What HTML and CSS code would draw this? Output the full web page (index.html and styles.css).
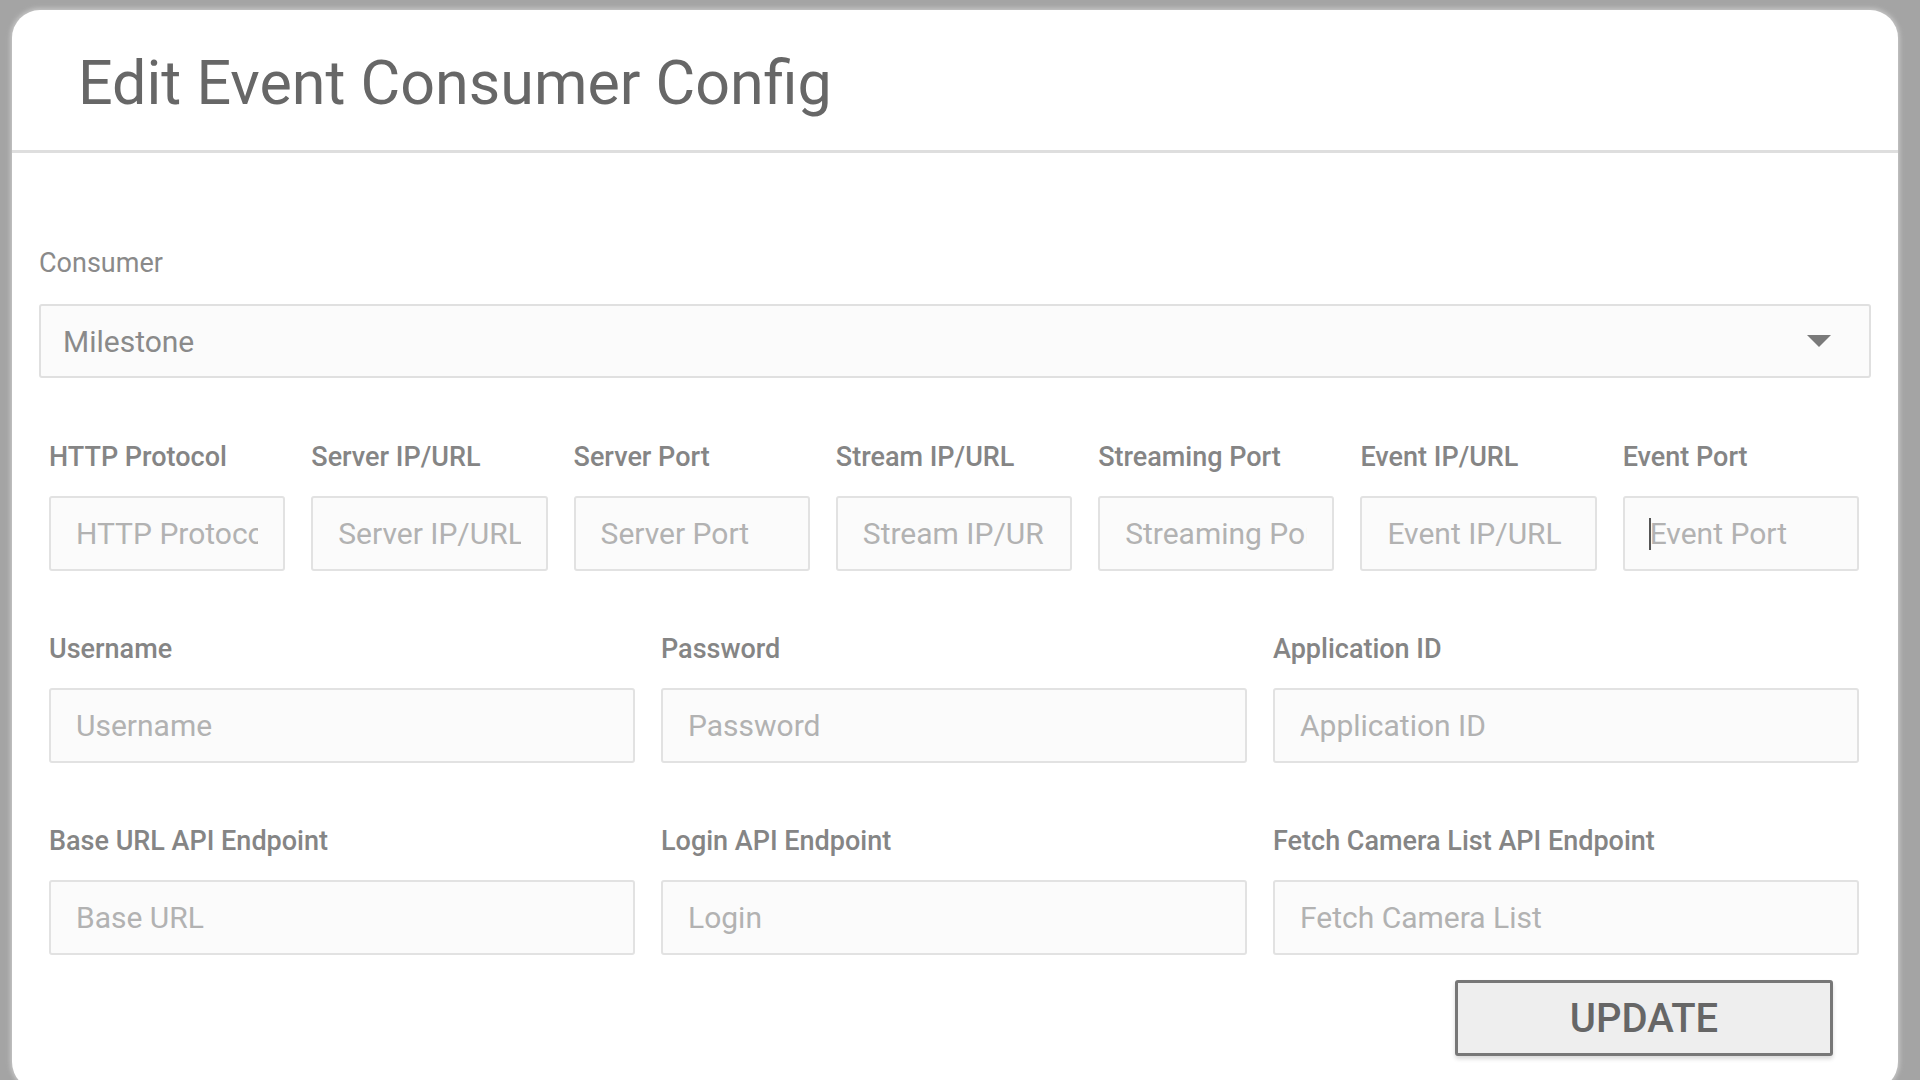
FILE: index.html
```html
<!DOCTYPE html>
<html lang="en">
<head>
    <meta charset="UTF-8">
    <title>Edit Event Consumer Config</title>
    <link rel="stylesheet" href="styles.css">
</head>
<body>
    <div class="dialog">
        <div class="dialog-header">
            <h1 class="dialog-title">Edit Event Consumer Config</h1>
        </div>
        <div class="dialog-body">
            <div class="consumer">
                <div class="label consumer-label">Consumer</div>
                <div class="select">
                    <span class="select-value">Milestone</span>
                    <svg class="select-arrow" width="24" height="12" viewBox="0 0 24 12">
                        <polygon points="0,0 24,0 12,12" fill="#7a7a7a"/>
                    </svg>
                </div>
            </div>

            <div class="grid grid-7">
                <div class="cell">
                    <label class="label">HTTP Protocol</label>
                    <input type="text" placeholder="HTTP Protocol">
                </div>
                <div class="cell">
                    <label class="label">Server IP/URL</label>
                    <input type="text" placeholder="Server IP/URL">
                </div>
                <div class="cell">
                    <label class="label">Server Port</label>
                    <input type="text" placeholder="Server Port">
                </div>
                <div class="cell">
                    <label class="label">Stream IP/URL</label>
                    <input type="text" placeholder="Stream IP/URL">
                </div>
                <div class="cell">
                    <label class="label">Streaming Port</label>
                    <input type="text" placeholder="Streaming Port">
                </div>
                <div class="cell">
                    <label class="label">Event IP/URL</label>
                    <input type="text" placeholder="Event IP/URL">
                </div>
                <div class="cell">
                    <label class="label">Event Port</label>
                    <div class="field focused">
                        <input type="text" placeholder="Event Port">
                        <span class="caret"></span>
                    </div>
                </div>
            </div>

            <div class="grid grid-3">
                <div class="cell">
                    <label class="label">Username</label>
                    <input type="text" placeholder="Username">
                </div>
                <div class="cell">
                    <label class="label">Password</label>
                    <input type="text" placeholder="Password">
                </div>
                <div class="cell">
                    <label class="label">Application ID</label>
                    <input type="text" placeholder="Application ID">
                </div>
            </div>

            <div class="grid grid-3">
                <div class="cell">
                    <label class="label">Base URL API Endpoint</label>
                    <input type="text" placeholder="Base URL">
                </div>
                <div class="cell">
                    <label class="label">Login API Endpoint</label>
                    <input type="text" placeholder="Login">
                </div>
                <div class="cell">
                    <label class="label">Fetch Camera List API Endpoint</label>
                    <input type="text" placeholder="Fetch Camera List">
                </div>
            </div>

            <div class="actions">
                <button class="update-btn">UPDATE</button>
            </div>
        </div>
    </div>
</body>
</html>
```

FILE: styles.css
```css
html, body {
    height: 100%;
}
body {
    margin: 0;
    background-color: #a4a4a4;
    font-family: Roboto, "Liberation Sans", Arial, sans-serif;
    overflow: hidden;
}
.dialog {
    box-sizing: border-box;
    height: 1080px;
    margin: 10px 22px 0 12px;
    background-color: #fff;
    border-radius: 28px;
    box-shadow: 0 0 4px 2px #c4c4c4;
    overflow: hidden;
}
.dialog-header {
    height: 143px;
    padding: 37px 0 0 66px;
    box-sizing: border-box;
    border-bottom: 3px solid #dedede;
}
.dialog-title {
    margin: 0;
    font-size: 61px;
    line-height: 73px;
    font-weight: 400;
    color: #676767;
}
.dialog-body {
    padding: 94px 27px 0 27px;
}
.label {
    display: block;
    font-size: 27px;
    line-height: 32px;
    font-weight: 500;
    color: #858585;
    white-space: nowrap;
}
.consumer-label {
    color: #8a8a8a;
    font-weight: 400;
}
.select {
    display: flex;
    align-items: center;
    justify-content: space-between;
    box-sizing: border-box;
    height: 74px;
    margin-top: 25px;
    padding: 0 38px 0 22px;
    border: 2px solid #e0e0e0;
    border-radius: 3px;
    background-color: #fbfbfb;
}
.select-value {
    font-size: 30px;
    color: #8a8a8a;
}
.grid {
    display: grid;
    column-gap: 26px;
    padding: 0 12px 0 10px;
    margin-top: 63px;
}
.grid + .grid {
    margin-top: 62px;
}
.grid-7 {
    grid-template-columns: repeat(7, 1fr);
}
.grid-3 {
    grid-template-columns: repeat(3, 1fr);
}
.cell {
    min-width: 0;
}
.cell input {
    display: block;
    width: 100%;
    box-sizing: border-box;
    height: 75px;
    margin-top: 23px;
    padding: 0 25px;
    border: 2px solid #e2e2e2;
    border-radius: 3px;
    background-color: #fbfbfb;
    font-family: Roboto, "Liberation Sans", Arial, sans-serif;
    font-size: 30px;
    color: #666;
    outline: none;
}
.cell input::placeholder {
    color: #b2b2b2;
}
.field {
    position: relative;
}
.caret {
    position: absolute;
    left: 26px;
    top: 22px;
    width: 2px;
    height: 32px;
    background-color: #555;
}
.actions {
    display: flex;
    justify-content: flex-end;
    padding-right: 38px;
    margin-top: 25px;
}
.update-btn {
    width: 378px;
    height: 76px;
    border: 3px solid #777;
    border-radius: 3px;
    background-color: #eeeeee;
    box-shadow: 0 3px 4px rgba(0, 0, 0, 0.15);
    font-family: Roboto, "Liberation Sans", Arial, sans-serif;
    font-size: 40px;
    font-weight: 500;
    color: #666;
    cursor: pointer;
}
```
